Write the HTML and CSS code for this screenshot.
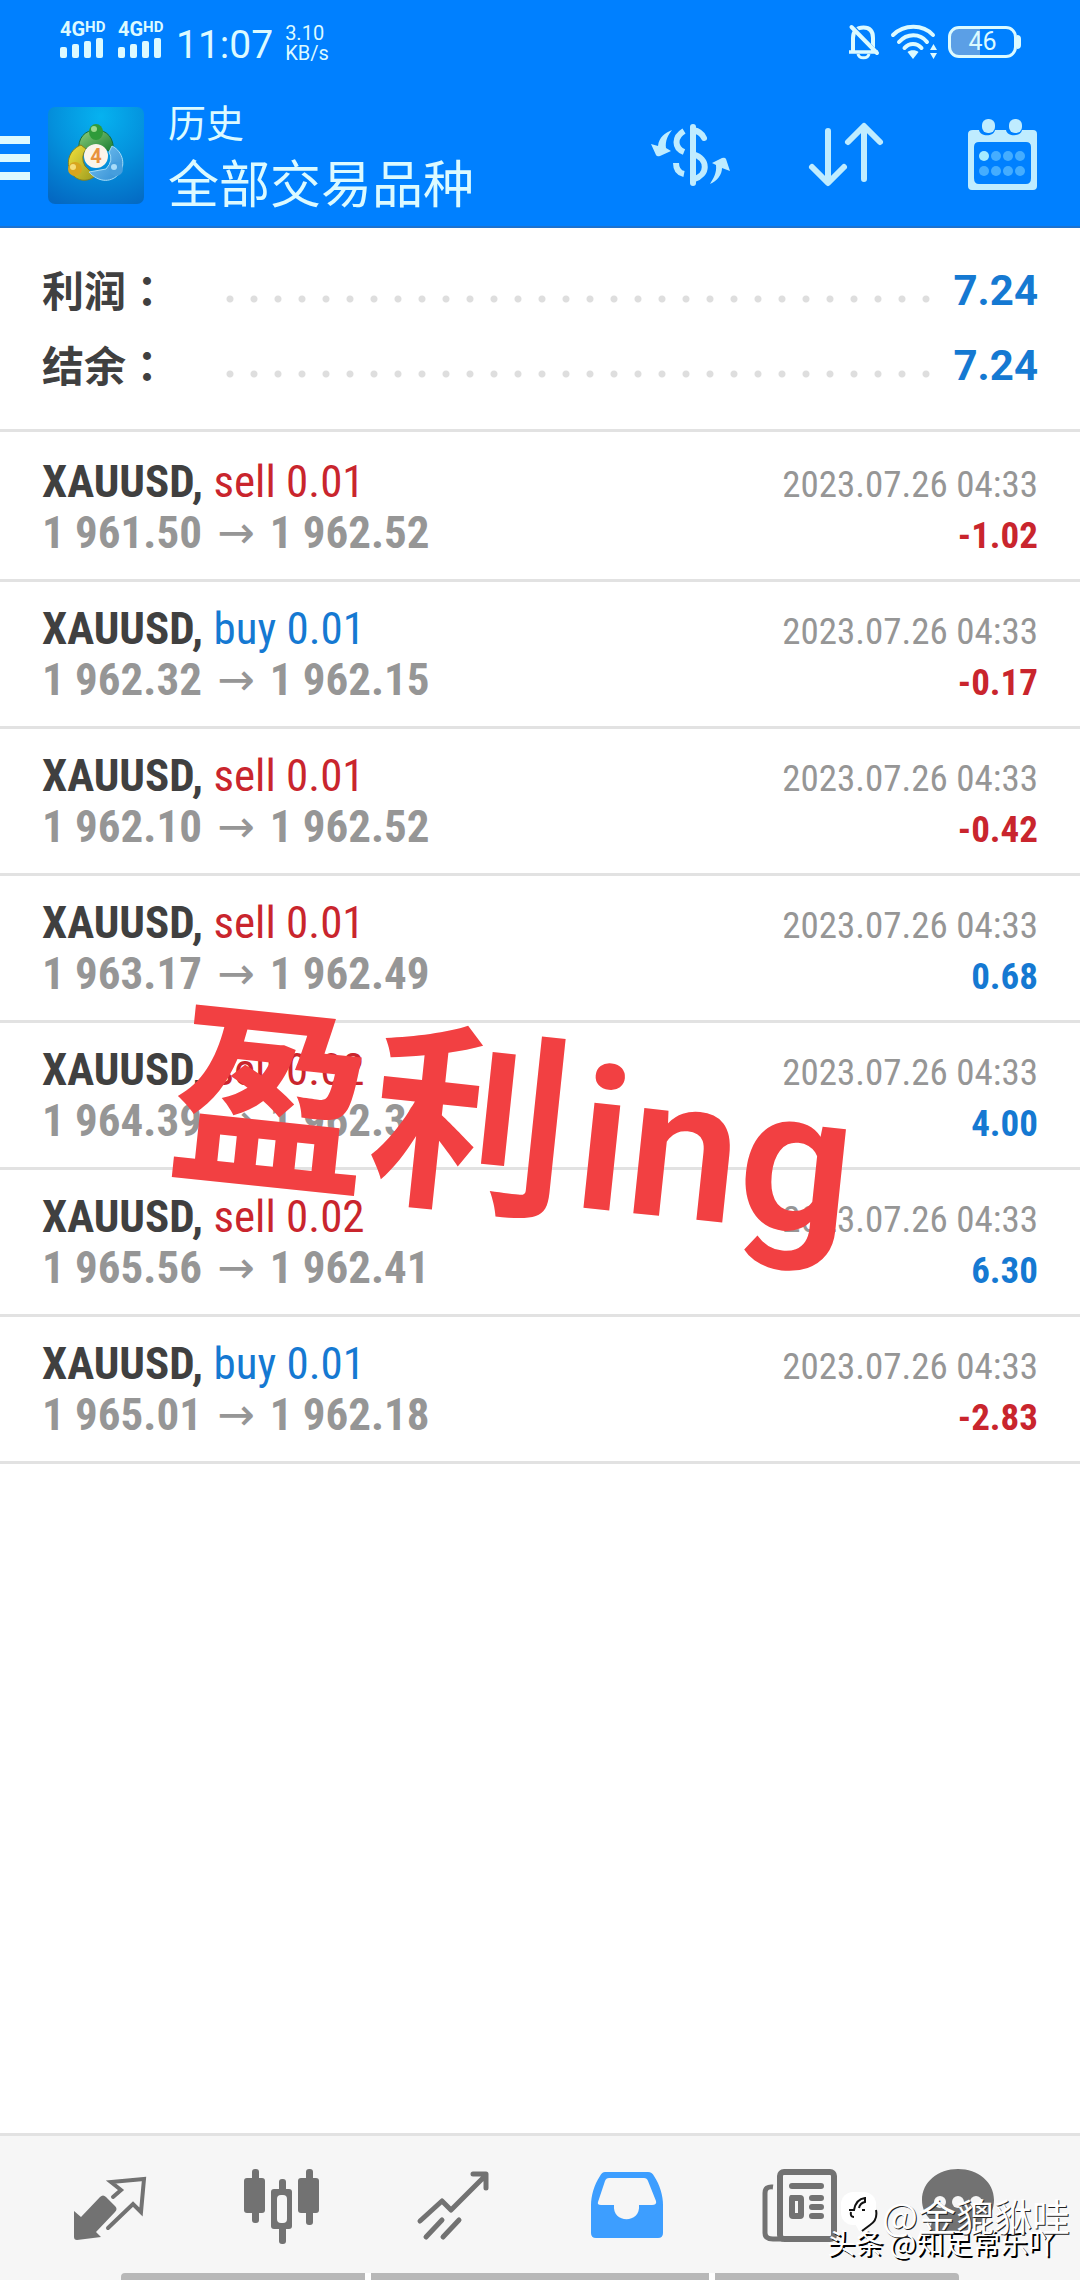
FILE: index.html
```
<!DOCTYPE html>
<html lang="zh-CN">
<head>
<meta charset="utf-8">
<meta name="viewport" content="width=device-width, initial-scale=1">
<title>历史</title>
<link rel="stylesheet" href="styles.css">
</head>
<body>
<header class="top">
  <div class="status">
    <div class="status-side">
      <div class="signal">
        <div class="net">4G<span class="hd">HD</span></div>
        <svg width="43" height="20" viewBox="0 0 43 20"><g fill="currentColor"><rect x="0" y="9" width="7" height="11" rx="2"/><rect x="12" y="6" width="7" height="14" rx="2"/><rect x="24" y="3" width="7" height="17" rx="2"/><rect x="36" y="0" width="7" height="20" rx="2"/></g></svg>
      </div>
      <div class="signal">
        <div class="net">4G<span class="hd">HD</span></div>
        <svg width="43" height="20" viewBox="0 0 43 20"><g fill="currentColor"><rect x="0" y="9" width="7" height="11" rx="2"/><rect x="12" y="6" width="7" height="14" rx="2"/><rect x="24" y="3" width="7" height="17" rx="2"/><rect x="36" y="0" width="7" height="20" rx="2"/></g></svg>
      </div>
      <time class="clock">11:07</time>
      <div class="speed"><span>3.10</span><span>KB/s</span></div>
    </div>
    <div class="status-side status-right">
      <svg width="32" height="36" viewBox="0 0 32 36" fill="none" stroke="currentColor" stroke-width="4"><path d="M5 27V14C5 7 9 3.500 15.500 3.500S25 7 25 14V27"/><path d="M1 28H30" stroke-width="3.500"/><path d="M10 30C11 35 20 35 21 30" stroke-width="3"/><path d="M7 4L31 31" stroke="#0080ff" stroke-width="3"/><path d="M3.500 3L29 29" stroke-linecap="round"/></svg>
      <svg width="48" height="36" viewBox="0 0 48 36" fill="none" stroke="currentColor" stroke-width="4" stroke-linecap="round"><path d="M3 11C14 0 33 0 43 11"/><path d="M9 18C17 9 30 9 37 18"/><path d="M14.500 24C19 18.500 27 18.500 31.500 24"/><path d="M17.500 28C20 25.500 26 25.500 28.500 28L23 35Z" fill="currentColor" stroke="none"/><path d="M40 26L43.500 20L47 26ZM40 29L43.500 35L47 29Z" fill="currentColor" stroke="none"/></svg>
      <div class="battery"><span>46</span></div>
    </div>
  </div>
  <div class="appbar">
    <button class="icon-btn menu" aria-label="菜单"><svg width="30" height="44" viewBox="0 0 30 44" fill="currentColor"><path d="M0 0H30V8H0ZM0 18H30V26H0ZM0 36H30V44H0Z"/></svg></button>
    <svg class="logo" viewBox="0 0 96 97">
      <defs>
        <radialGradient id="sky" cx=".55" cy=".1" r="1"><stop offset="0" stop-color="#06b2f0"/><stop offset=".5" stop-color="#0490dc"/><stop offset="1" stop-color="#0468c2"/></radialGradient>
        <linearGradient id="gr" x2="1" y2="1"><stop stop-color="#8fd080"/><stop offset="1" stop-color="#157a2c"/></linearGradient>
        <linearGradient id="ye" x2="1" y2="1"><stop stop-color="#f3e23c"/><stop offset="1" stop-color="#9c9a1e"/></linearGradient>
        <linearGradient id="bl" x2="1" y2="1"><stop stop-color="#7cc8f4"/><stop offset="1" stop-color="#2f8bd2"/></linearGradient>
      </defs>
      <rect width="96" height="97" rx="7" fill="url(#sky)"/>
      <path d="M31 45C29 31 37 23 48 23S67 31 65 46L55 41Q48 34 40 41Z" fill="url(#gr)" stroke="#156b39" stroke-width="1"/>
      <path d="M33 38C20 43 17 58 24 67S42 74 47 69L37 59Q32 50 38 42Z" fill="url(#ye)" stroke="#847f1d" stroke-width="1"/>
      <path d="M64 39C76 45 78 60 70 68S50 75 41 65L58 62Q66 53 61 45Z" fill="url(#bl)" stroke="#a5dcf7" stroke-width="1"/>
      <ellipse cx="48" cy="25" rx="7" ry="8" fill="#2f9b3a"/><ellipse cx="46" cy="22" rx="3" ry="3" fill="#9bd88c"/>
      <circle cx="27" cy="62" r="7" fill="#d9a51e"/><circle cx="25" cy="60" r="3" fill="#f5dd7a"/>
      <circle cx="68" cy="62" r="7" fill="#469edd"/><circle cx="66" cy="60" r="3" fill="#a8dbf8"/>
      <circle cx="48" cy="49" r="12" fill="#fbf4ea"/>
      <text x="48" y="56" text-anchor="middle" class="logo-num">4</text>
    </svg>
    <div class="titles">
      <p class="subtitle">历史</p>
      <h1 class="title">全部交易品种</h1>
    </div>
    <div class="actions">
      <button class="icon-btn" aria-label="交易品种"><svg width="80" height="76" viewBox="0 0 80 76" fill="none" stroke="currentColor" stroke-width="6"><path d="M42 10V66" stroke-linecap="round"/><path d="M42 13C47 14 51 16 53 21" stroke-linecap="round"/><path d="M33 14C23 20 23 31 33 35"/><path d="M42 37C58 42 57 58 43 62"/><path d="M25 46C25 52 28 56 33 57"/><g fill="currentColor" stroke="none"><path d="M21 13C14 16 8 20 7 29L0 27L5 38Q6 40 9 39L20 34L15 31C14 24 17 18 21 13Z"/><path d="M59 67C66 64 71 58 71 51L79 54L75 42Q74 40 71 41L61 46L65 48C66 56 62 62 59 67Z"/></g></svg></button>
      <button class="icon-btn" aria-label="排序"><svg width="80" height="76" viewBox="0 0 80 76" fill="none" stroke="currentColor" stroke-width="6" stroke-linecap="round" stroke-linejoin="round"><path d="M21 14V65M5 50L21 66L37 50"/><path d="M57 62V10M41 25L57 9L73 25"/></svg></button>
      <button class="icon-btn" aria-label="日期"><svg width="80" height="76" viewBox="0 0 80 76"><path fill="currentColor" fill-rule="evenodd" d="M10 13H16C17 20 31 20 32 13H43C44 20 58 20 59 13H70Q74 13 74 17V69Q74 73 70 73H9Q5 73 5 69V17Q5 13 10 13ZM16 25Q11 25 11 30V61Q11 67 16 67H63Q68 67 68 61V30Q68 25 63 25Z"/><rect x="19" y="2" width="13" height="14" rx="6" fill="currentColor"/><rect x="46" y="2" width="13" height="14" rx="6" fill="currentColor"/><circle cx="21" cy="39" r="5" fill="#a6ecff"/><g fill="#45adff"><circle cx="33" cy="39" r="5"/><circle cx="45" cy="39" r="5"/><circle cx="57" cy="39" r="5"/><circle cx="21" cy="54" r="5"/><circle cx="33" cy="54" r="5"/><circle cx="45" cy="54" r="5"/><circle cx="57" cy="54" r="5"/></g></svg></button>
    </div>
  </div>
</header>

<main class="content">
  <dl class="summary">
    <div class="sum-row"><dt>利润<span lang="zh-TW" class="colon">：</span></dt><dd class="dots"></dd><dd class="sum-val">7.24</dd></div>
    <div class="sum-row"><dt>结余<span lang="zh-TW" class="colon">：</span></dt><dd class="dots"></dd><dd class="sum-val">7.24</dd></div>
  </dl>
  <ul class="deals">
    <li class="deal"><div class="line"><span class="sym">XAUUSD, <span class="side sell">sell 0.01</span></span><time class="date">2023.07.26 04:33</time></div><div class="line"><span class="price">1 961.50<span class="arrow">→</span>1 962.52</span><span class="amount loss">-1.02</span></div></li>
    <li class="deal"><div class="line"><span class="sym">XAUUSD, <span class="side buy">buy 0.01</span></span><time class="date">2023.07.26 04:33</time></div><div class="line"><span class="price">1 962.32<span class="arrow">→</span>1 962.15</span><span class="amount loss">-0.17</span></div></li>
    <li class="deal"><div class="line"><span class="sym">XAUUSD, <span class="side sell">sell 0.01</span></span><time class="date">2023.07.26 04:33</time></div><div class="line"><span class="price">1 962.10<span class="arrow">→</span>1 962.52</span><span class="amount loss">-0.42</span></div></li>
    <li class="deal"><div class="line"><span class="sym">XAUUSD, <span class="side sell">sell 0.01</span></span><time class="date">2023.07.26 04:33</time></div><div class="line"><span class="price">1 963.17<span class="arrow">→</span>1 962.49</span><span class="amount gain">0.68</span></div></li>
    <li class="deal"><div class="line"><span class="sym">XAUUSD, <span class="side sell">sell 0.02</span></span><time class="date">2023.07.26 04:33</time></div><div class="line"><span class="price">1 964.39<span class="arrow">→</span>1 962.39</span><span class="amount gain">4.00</span></div></li>
    <li class="deal"><div class="line"><span class="sym">XAUUSD, <span class="side sell">sell 0.02</span></span><time class="date">2023.07.26 04:33</time></div><div class="line"><span class="price">1 965.56<span class="arrow">→</span>1 962.41</span><span class="amount gain">6.30</span></div></li>
    <li class="deal"><div class="line"><span class="sym">XAUUSD, <span class="side buy">buy 0.01</span></span><time class="date">2023.07.26 04:33</time></div><div class="line"><span class="price">1 965.01<span class="arrow">→</span>1 962.18</span><span class="amount loss">-2.83</span></div></li>
  </ul>
  <div class="sticker">盈利<span class="sticker-latin">ing</span></div>
</main>

<footer class="bottom">
  <nav class="tabs">
    <button class="tab" aria-label="行情"><svg width="76" height="76" viewBox="0 0 76 76"><path fill="currentColor" d="M2 43L9 49L28 29Q31 26 34 29L43 38Q46 41 43 44L24 64L29 69L5 72Q2 72 2 69Z"/><path fill="none" stroke="currentColor" stroke-width="4" stroke-linecap="round" d="M41 29L49 22L39 14L72 11L69 44L61 36L36 60"/></svg></button>
    <button class="tab" aria-label="图表"><svg width="76" height="76" viewBox="0 0 76 76" fill="currentColor"><rect x="8" y="1" width="7" height="54" rx="3"/><rect x="0" y="10" width="21" height="35" rx="3"/><rect x="62" y="1" width="7" height="56" rx="3"/><rect x="54" y="10" width="21" height="35" rx="3"/><rect x="35" y="11" width="7" height="65" rx="3"/><rect x="27" y="21" width="21" height="40" rx="3"/><rect x="33" y="27" width="10" height="28" rx="4" fill="#f6f6f6"/></svg></button>
    <button class="tab" aria-label="交易"><svg width="76" height="76" viewBox="0 0 76 76" fill="none" stroke="currentColor" stroke-width="5" stroke-linecap="round" stroke-linejoin="round"><path d="M4 53L26 33L35 42L69 8M57 6H70V20M10 69L26 52M27 69L43 52"/></svg></button>
    <button class="tab tab-active" aria-label="历史"><svg width="76" height="76" viewBox="0 0 76 76"><path fill="currentColor" fill-rule="evenodd" d="M16 4H59Q63 4 65 8C71 17 74 28 74 37V65Q74 70 69 70H7Q2 70 2 65V37C2 28 5 17 11 8Q13 4 16 4ZM20 10Q17 10 16 13L9 34Q8 37 12 37H25C23 56 52 56 50 37H63Q68 37 67 33L59 13Q58 10 55 10Z"/></svg></button>
    <button class="tab" aria-label="新闻"><svg width="76" height="76" viewBox="0 0 76 76" fill="none" stroke="currentColor" stroke-width="6"><rect x="19" y="4" width="54" height="67" rx="4"/><path d="M12 19Q4 18 4 25V65Q4 71 12 71H22" stroke-width="5"/><path d="M31 18H60M51 30H60M51 39H60M51 48H60" stroke-linecap="round"/><path fill="currentColor" stroke="none" fill-rule="evenodd" d="M30 27H39Q43 27 43 31V47Q43 51 39 51H32Q28 51 28 47V31Q28 27 30 27ZM34 33V45H37V33Z"/></svg></button>
    <button class="tab" aria-label="消息"><svg width="76" height="76" viewBox="0 0 76 76"><path fill="currentColor" d="M38 1C58 1 74 14 74 32S58 63 38 63C30 63 22 61 8 72L12 53C5 47 2 40 2 32C2 14 18 1 38 1Z"/><circle cx="20" cy="34" r="6" fill="#f6f6f6"/><circle cx="38" cy="34" r="6" fill="#f6f6f6"/><circle cx="56" cy="34" r="6" fill="#f6f6f6"/></svg></button>
  </nav>
  <div class="gesture"><i></i><i class="wide"></i><i></i></div>
  <p class="mark mark-low">头条 @知足常乐吖</p>
  <p class="mark mark-high"><svg width="38" height="42" viewBox="0 0 38 42"><rect x="1" y="2" width="35" height="33" rx="12" fill="#fff"/><path fill="#fff" d="M13 30H33Q29 41 19 41Z"/><path fill="none" stroke="#111" stroke-width="2" d="M9 20H14Q16 9 25 8V12Q20 13 19 18M22 20H25M11 22Q10 27 14 27M36 20Q38 30 30 35L22 41"/></svg><span>@金貔貅哇</span></p>
</footer>
</body>
</html>
```
FILE: styles.css
```
* { box-sizing: border-box; margin: 0; padding: 0; }
html { height: 100%; }
body {
  min-height: 100%;
  display: flex;
  flex-direction: column;
  background: #fff;
  color: #404040;
  font-family: Roboto, "Noto Sans CJK SC", sans-serif;
}
button { border: 0; background: none; color: inherit; font: inherit; }
svg { display: block; flex: none; }
ul { list-style: none; }

.top { background: #0080ff; color: #dcfaff; border-bottom: 2px solid #1d72cf; }
.status {
  display: flex;
  justify-content: space-between;
  height: 80px;
  padding: 20px 63px 0 60px;
}
.status-side { display: flex; align-items: flex-start; }
.signal { width: 58px; padding-top: 1px; }
.net { display: flex; height: 17px; font: 700 20px/17px Roboto, sans-serif; }
.hd { font-size: 15px; line-height: 12px; }
.clock { margin-right: 12px; font-size: 39px; line-height: 50px; }
.speed { display: flex; flex-direction: column; font-size: 20px; line-height: 20px; padding-top: 3px; }
.status-right { gap: 10px; padding-top: 4px; }
.battery {
  position: relative;
  width: 69px;
  height: 32px;
  margin-top: 2px;
  border: 3px solid currentColor;
  border-radius: 11px;
  background: linear-gradient(90deg, #5b9fe6 46%, transparent 46%);
  font-size: 25px;
  line-height: 26px;
  text-align: center;
}
.battery::after {
  content: "";
  position: absolute;
  right: -7px;
  top: 6px;
  width: 4px;
  height: 14px;
  border-radius: 0 4px 4px 0;
  background: currentColor;
}

.appbar { display: flex; align-items: flex-start; height: 146px; padding-right: 37px; }
.icon-btn { display: block; }
.menu { padding: 56px 18px 0 0; }
.logo { width: 96px; height: 97px; margin: 27px 24px 0 0; }
.logo-num { font: 700 20px Roboto, sans-serif; fill: #e8923c; }
.titles { flex: 1; padding-top: 19px; }
.subtitle { font-size: 38px; line-height: 50px; }
.title { font-size: 51px; line-height: 74px; font-weight: 400; }
.actions { display: flex; gap: 76px; padding-top: 37px; color: #bfecff; }

.content { position: relative; flex: 1; }
.summary { padding: 25px 42px 26px; border-bottom: 3px solid #e2e2e2; }
.sum-row { display: flex; align-items: center; height: 75px; }
dt { width: 176px; font-size: 42px; line-height: 75px; font-weight: 700; }
.colon { font-family: "Noto Sans CJK TC", sans-serif; }
.dots {
  flex: 1;
  height: 8px;
  margin: 16px 16px 0 0;
  background: radial-gradient(circle at 12px 4px, #dedede 3px, transparent 4px) 0 0 / 24px 8px round;
}
.sum-val { font-size: 42px; line-height: 76px; font-weight: 700; color: #1579d2; }

.deals { padding-top: 3px; }
.deal {
  padding: 21px 42px;
  border-bottom: 3px solid #e2e2e2;
  font-family: "Roboto Condensed", sans-serif;
}
.line { display: flex; justify-content: space-between; align-items: baseline; height: 51px; line-height: 51px; white-space: nowrap; }
.sym { font-size: 45px; font-weight: 700; }
.side { font-weight: 400; }
.price { font-size: 45px; font-weight: 700; color: #969696; }
.arrow { padding: 0 15px; font-family: "DejaVu Sans", sans-serif; font-weight: 400; line-height: 40px; }
.date { font-size: 37px; color: #969696; }
.amount { font-size: 37px; font-weight: 700; }
.sell, .loss { color: #c9252d; }
.buy, .gain { color: #1579d2; }

.sticker {
  position: absolute;
  left: 170px;
  top: 764px;
  color: #f24042;
  font: 700 200px/280px Roboto, "Noto Sans CJK SC", sans-serif;
  white-space: nowrap;
  transform: rotate(6deg);
}
.sticker-latin { margin-left: 8px; font-weight: 600; }

.bottom { position: relative; background: #f6f6f6; border-top: 3px solid #e2e2e2; }
.tabs {
  display: grid;
  grid-template-columns: repeat(5, 172fr) 146fr;
  padding: 32px 49px 29px 24px;
  color: #727272;
}
.tab { display: flex; justify-content: center; }
.tab-active { color: #3d9eff; }
.gesture { display: flex; gap: 6px; padding: 0 121px; }
.gesture i { flex: 244; height: 7px; background: #b8b8b8; box-shadow: 6px 0 0 #fff; }
.gesture .wide { flex: 338; }
.gesture i:first-child { border-radius: 4px 0 0 0; }
.gesture i:last-child { border-radius: 0 4px 0 0; box-shadow: none; }
.mark { position: absolute; display: flex; color: #fff; white-space: nowrap; font-family: "Noto Sans CJK SC", sans-serif; }
.mark-low { right: 24px; bottom: 18px; font-size: 28px; line-height: 40px; text-shadow: 2px 2px 0 #000; }
.mark-high { right: 10px; bottom: 40px; gap: 4px; font-size: 38px; line-height: 50px; text-shadow: 1px 1px 0 #222; }
```
